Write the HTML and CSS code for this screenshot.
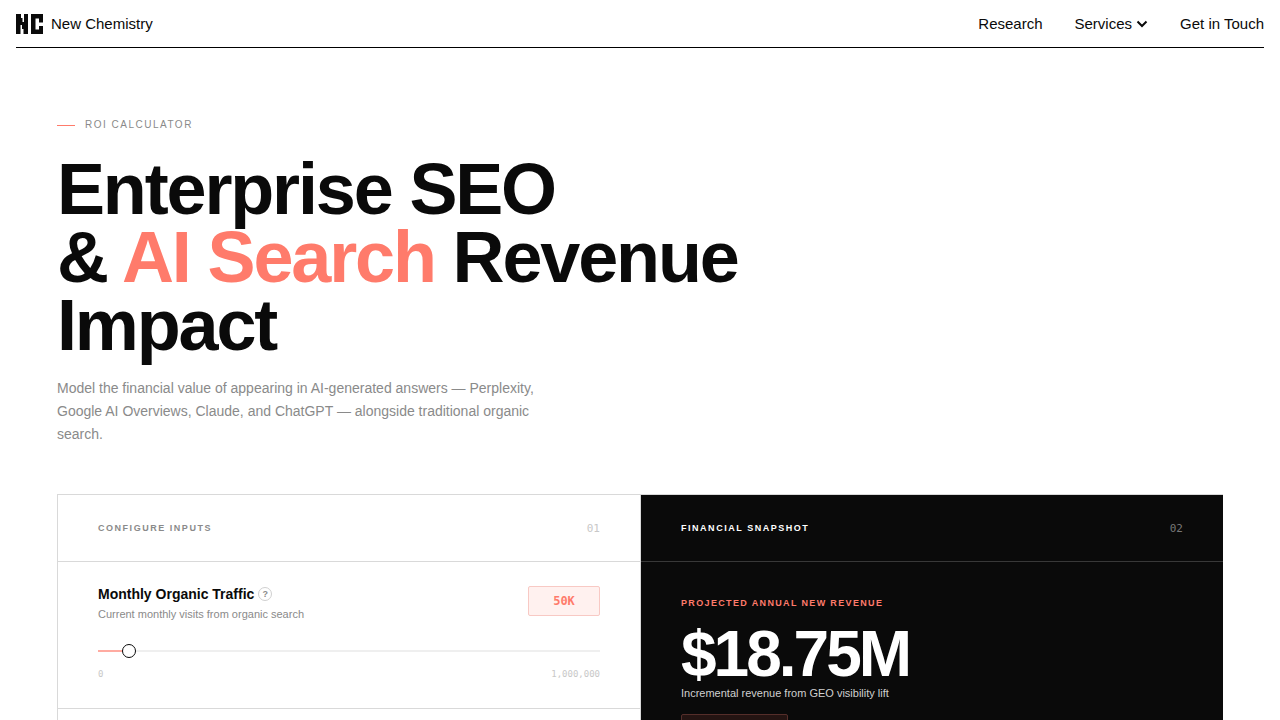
FILE: index.html
```html
<!DOCTYPE html>
<html lang="en">
<head>
<meta charset="utf-8">
<meta name="viewport" content="width=device-width, initial-scale=1">
<title>ROI Calculator – New Chemistry</title>
<link rel="stylesheet" href="styles.css">
</head>
<body>
<header class="site-header">
  <a class="brand" href="#">
    <svg class="brand-mark" viewBox="0 0 27 20" aria-hidden="true">
      <path d="M0 0h5v4h1.500v4H8V0h4v20H7.500v-5H6v-4H4.500v9H0z"/>
      <path d="M15 0h12v8.500h-4V4.500h-3.500v11H23V12h4v8H15z"/>
    </svg>
    <span>New Chemistry</span>
  </a>
  <nav class="site-nav" aria-label="Main">
    <a href="#">Research</a>
    <button class="nav-button" type="button" aria-haspopup="true">Services
      <svg class="chevron" viewBox="0 0 12 8" aria-hidden="true"><path d="M1.500 1.500 6 6l4.500-4.500"/></svg>
    </button>
    <a href="#">Get in Touch</a>
  </nav>
</header>
<main class="page">
  <section class="hero">
    <p class="eyebrow">ROI Calculator</p>
    <h1 class="title">Enterprise SEO<br>&amp; <span class="accent">AI Search</span> Revenue Impact</h1>
    <p class="lead">Model the financial value of appearing in AI-generated answers — Perplexity, Google AI Overviews, Claude, and ChatGPT — alongside traditional organic search.</p>
  </section>
  <div class="calculator">
    <section class="panel">
      <header class="panel-head"><h2 class="panel-title">Configure Inputs</h2><span class="panel-number">01</span></header>
      <div class="field">
        <div class="field-top">
          <div>
            <div class="field-name">
              <label for="traffic">Monthly Organic Traffic</label>
              <button class="help" type="button" aria-label="About monthly organic traffic">?</button>
            </div>
            <p class="field-hint">Current monthly visits from organic search</p>
          </div>
          <input class="field-value" type="text" value="50K" aria-label="Monthly organic traffic value">
        </div>
        <input class="slider" id="traffic" type="range" min="0" max="1000000" value="50000" style="--fill:5%">
        <div class="limits"><span>0</span><span>1,000,000</span></div>
      </div>
    </section>
    <section class="panel panel-dark">
      <header class="panel-head"><h2 class="panel-title">Financial Snapshot</h2><span class="panel-number">02</span></header>
      <div class="result">
        <h3 class="result-label">Projected Annual New Revenue</h3>
        <p class="result-value">$18.75M</p>
        <p class="result-note">Incremental revenue from GEO visibility lift</p>
        <div class="result-tag"></div>
      </div>
    </section>
  </div>
</main>
</body>
</html>
```
FILE: styles.css
```css
* { box-sizing: border-box; }
body {
  margin: 0;
  height: 100vh;
  overflow: hidden;
  background: #fff;
  color: #0a0a0a;
  font-family: "Liberation Sans", Arial, sans-serif;
}
h1, h2, h3, p { margin: 0; }
button, input { font: inherit; }
a { color: inherit; text-decoration: none; }

.site-header {
  display: flex;
  align-items: center;
  justify-content: space-between;
  height: 48px;
  margin: 0 16px;
  border-bottom: 1px solid #000;
  font-size: 15px;
}
.brand { display: flex; align-items: center; gap: 8px; }
.brand-mark { width: 27px; height: 20px; fill: #0a0a0a; }
.site-nav { display: flex; align-items: center; gap: 32px; }
.nav-button {
  display: flex;
  align-items: center;
  gap: 4px;
  padding: 0;
  border: 0;
  background: none;
  color: inherit;
}
.chevron { width: 12px; height: 8px; fill: none; stroke: #0a0a0a; stroke-width: 2; }

.page { padding: 70px 57px 0; }
.eyebrow {
  display: flex;
  align-items: center;
  gap: 10px;
  color: #8a8a8a;
  font-size: 10px;
  line-height: 14px;
  letter-spacing: 0.15em;
  text-transform: uppercase;
}
.eyebrow::before { content: ""; width: 18px; border-top: 1px solid #ff7b6b; }
.title {
  max-width: 760px;
  margin-top: 23px;
  font-size: 72px;
  line-height: 68px;
  letter-spacing: -0.03em;
}
.accent { color: #ff7b6b; }
.lead {
  max-width: 480px;
  margin-top: 18px;
  color: #8a8a8a;
  font-size: 14px;
  line-height: 23px;
}

.calculator {
  display: grid;
  grid-template-columns: 1fr 1fr;
  margin-top: 48px;
  border-top: 1px solid #d9d9d9;
}
.panel { border-left: 1px solid #d9d9d9; }
.panel-head {
  display: flex;
  align-items: center;
  justify-content: space-between;
  height: 67px;
  padding: 0 40px;
  border-bottom: 1px solid #d9d9d9;
}
.panel-title {
  color: #8a8a8a;
  font-size: 9px;
  letter-spacing: 0.17em;
  text-transform: uppercase;
}
.panel-number {
  color: #c8c8c8;
  font-family: "DejaVu Sans Mono", monospace;
  font-size: 11px;
}
.field { padding: 24px 40px 28px; border-bottom: 1px solid #d9d9d9; }
.field-top { display: flex; justify-content: space-between; align-items: flex-start; }
.field-name {
  display: flex;
  align-items: center;
  gap: 4px;
  font-size: 14px;
  font-weight: bold;
  line-height: 16px;
}
.help {
  width: 14px;
  height: 14px;
  padding: 0;
  border: 1px solid #d0d0d0;
  border-radius: 50%;
  background: none;
  color: #8a8a8a;
  font-size: 9px;
  font-weight: bold;
  line-height: 12px;
}
.field-hint { margin-top: 5px; color: #8a8a8a; font-size: 11px; line-height: 14px; }
.field-value {
  width: 72px;
  height: 30px;
  padding: 0;
  border: 1px solid #f8c9c4;
  border-radius: 2px;
  background: #fff1ef;
  color: #ff7b6b;
  font-family: "DejaVu Sans Mono", monospace;
  font-size: 12px;
  font-weight: bold;
  text-align: center;
}
.slider {
  display: block;
  width: 100%;
  height: 14px;
  margin: 23px 0 0;
  appearance: none;
  background: none;
}
.slider::-webkit-slider-runnable-track {
  height: 2px;
  background: linear-gradient(to right, #ffaba1 var(--fill), #efefef var(--fill));
}
.slider::-webkit-slider-thumb {
  width: 14px;
  height: 14px;
  margin-top: -6px;
  appearance: none;
  border: 1px solid #0a0a0a;
  border-radius: 50%;
  background: #fff;
}
.limits {
  display: flex;
  justify-content: space-between;
  margin-top: 10px;
  color: #c8c8c8;
  font-family: "DejaVu Sans Mono", monospace;
  font-size: 9px;
  line-height: 12px;
}

.panel-dark { background: #0a0a0a; color: #fff; }
.panel-dark .panel-head { border-bottom-color: #383838; }
.panel-dark .panel-title { color: #fff; }
.panel-dark .panel-number { color: #777; }
.result { padding: 34px 40px; }
.result-label {
  color: #ff7b6b;
  font-size: 9px;
  line-height: 14px;
  letter-spacing: 0.15em;
  text-transform: uppercase;
}
.result-value {
  margin-top: 12px;
  font-size: 64px;
  font-weight: bold;
  line-height: 64px;
  letter-spacing: -3px;
}
.result-note { color: #d0d0d0; font-size: 11px; line-height: 14px; }
.result-tag {
  width: 107px;
  height: 26px;
  margin-top: 14px;
  border: 1px solid #552e2a;
  border-radius: 2px;
  background: #241412;
}
```
